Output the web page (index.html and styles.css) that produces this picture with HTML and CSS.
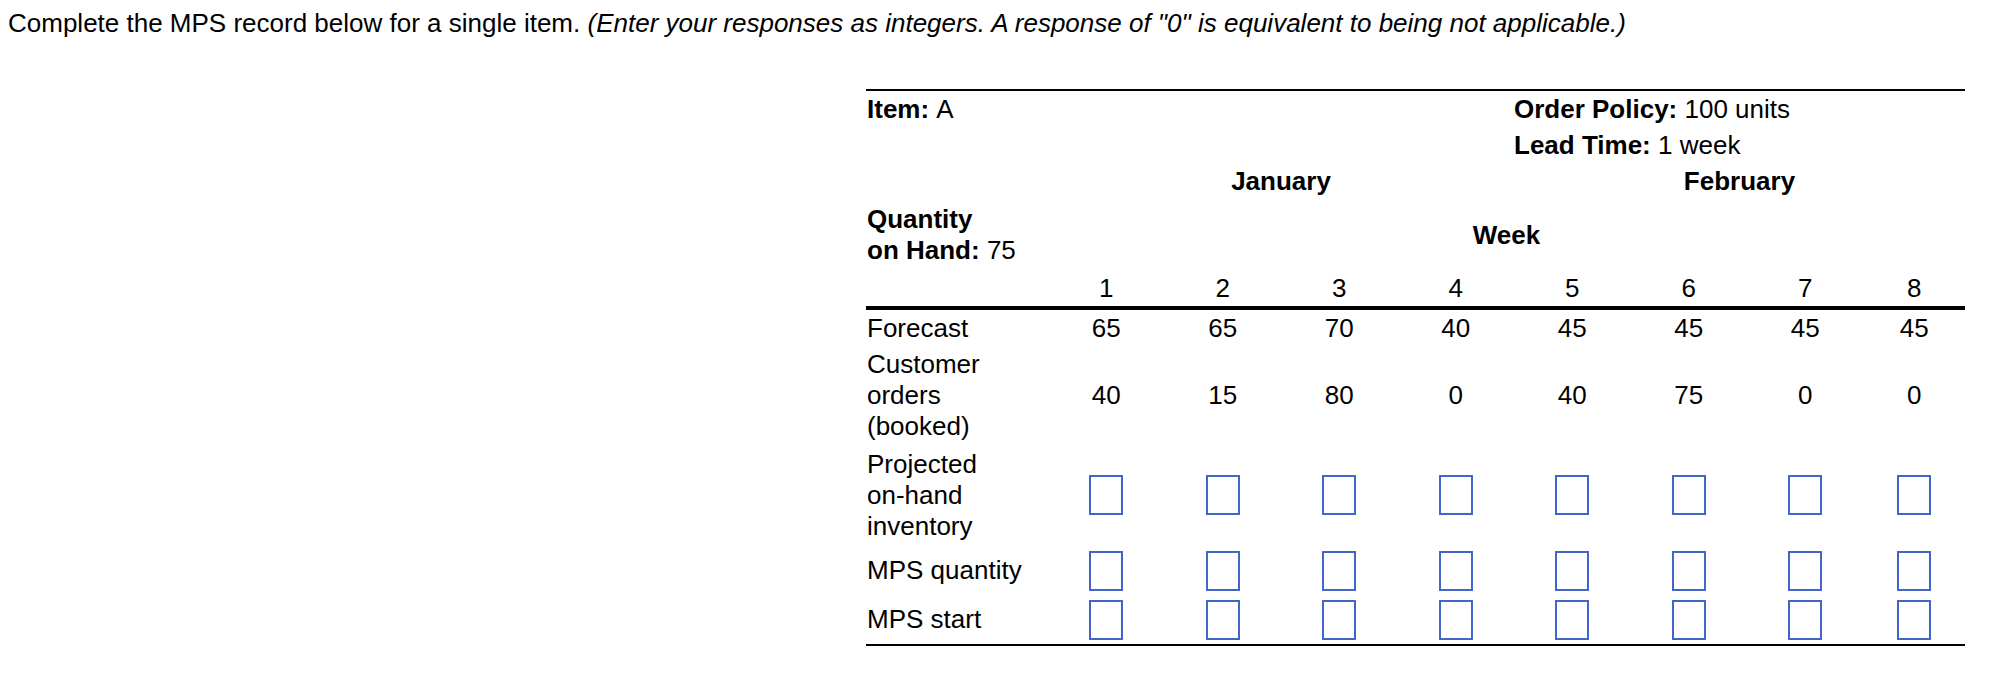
FILE: index.html
```html
<!DOCTYPE html>
<html lang="en">
<head>
<meta charset="utf-8">
<title>MPS record</title>
<link rel="stylesheet" href="styles.css">
</head>
<body>
<p class="prompt">Complete the MPS record below for a single item. <i>(Enter your responses as integers. A response of "0" is equivalent to being not applicable.)</i></p>

<div class="mps">
  <div class="cell lbl r-item"><b>Item:</b>&nbsp;A</div>
  <div class="cell info r-item"><b>Order Policy:</b>&nbsp;100 units</div>
  <div class="cell info r-lead"><b>Lead Time:</b>&nbsp;1 week</div>
  <div class="cell month jan"><b>January</b></div>
  <div class="cell month feb"><b>February</b></div>
  <div class="cell lbl r-qoh"><span><b>Quantity</b><br><b>on Hand:</b> 75</span></div>
  <div class="cell week"><b>Week</b></div>

  <div class="cell lbl r-wk"></div>
  <div class="cell num r-wk">1</div>
  <div class="cell num r-wk">2</div>
  <div class="cell num r-wk">3</div>
  <div class="cell num r-wk">4</div>
  <div class="cell num r-wk">5</div>
  <div class="cell num r-wk">6</div>
  <div class="cell num r-wk">7</div>
  <div class="cell num r-wk">8</div>

  <div class="rule"></div>

  <div class="cell lbl">Forecast</div>
  <div class="cell num">65</div>
  <div class="cell num">65</div>
  <div class="cell num">70</div>
  <div class="cell num">40</div>
  <div class="cell num">45</div>
  <div class="cell num">45</div>
  <div class="cell num">45</div>
  <div class="cell num">45</div>

  <div class="cell lbl"><span>Customer<br>orders<br>(booked)</span></div>
  <div class="cell num">40</div>
  <div class="cell num">15</div>
  <div class="cell num">80</div>
  <div class="cell num">0</div>
  <div class="cell num">40</div>
  <div class="cell num">75</div>
  <div class="cell num">0</div>
  <div class="cell num">0</div>

  <div class="cell lbl"><span>Projected<br>on-hand<br>inventory</span></div>
  <div class="cell num"><input class="box" type="text" aria-label="Projected on-hand inventory week 1"></div>
  <div class="cell num"><input class="box" type="text" aria-label="Projected on-hand inventory week 2"></div>
  <div class="cell num"><input class="box" type="text" aria-label="Projected on-hand inventory week 3"></div>
  <div class="cell num"><input class="box" type="text" aria-label="Projected on-hand inventory week 4"></div>
  <div class="cell num"><input class="box" type="text" aria-label="Projected on-hand inventory week 5"></div>
  <div class="cell num"><input class="box" type="text" aria-label="Projected on-hand inventory week 6"></div>
  <div class="cell num"><input class="box" type="text" aria-label="Projected on-hand inventory week 7"></div>
  <div class="cell num"><input class="box" type="text" aria-label="Projected on-hand inventory week 8"></div>

  <div class="cell lbl">MPS quantity</div>
  <div class="cell num"><input class="box" type="text" aria-label="MPS quantity week 1"></div>
  <div class="cell num"><input class="box" type="text" aria-label="MPS quantity week 2"></div>
  <div class="cell num"><input class="box" type="text" aria-label="MPS quantity week 3"></div>
  <div class="cell num"><input class="box" type="text" aria-label="MPS quantity week 4"></div>
  <div class="cell num"><input class="box" type="text" aria-label="MPS quantity week 5"></div>
  <div class="cell num"><input class="box" type="text" aria-label="MPS quantity week 6"></div>
  <div class="cell num"><input class="box" type="text" aria-label="MPS quantity week 7"></div>
  <div class="cell num"><input class="box" type="text" aria-label="MPS quantity week 8"></div>

  <div class="cell lbl">MPS start</div>
  <div class="cell num"><input class="box" type="text" aria-label="MPS start week 1"></div>
  <div class="cell num"><input class="box" type="text" aria-label="MPS start week 2"></div>
  <div class="cell num"><input class="box" type="text" aria-label="MPS start week 3"></div>
  <div class="cell num"><input class="box" type="text" aria-label="MPS start week 4"></div>
  <div class="cell num"><input class="box" type="text" aria-label="MPS start week 5"></div>
  <div class="cell num"><input class="box" type="text" aria-label="MPS start week 6"></div>
  <div class="cell num"><input class="box" type="text" aria-label="MPS start week 7"></div>
  <div class="cell num"><input class="box" type="text" aria-label="MPS start week 8"></div>
</div>
</body>
</html>
```

FILE: styles.css
```css
html, body {
  background: #ffffff;
}

body {
  margin: 8px;
  font-family: "Liberation Sans", Arial, Helvetica, sans-serif;
  font-size: 26px;
  color: #000000;
}

.prompt {
  margin: 0 0 51px 0;
  line-height: 30px;
  white-space: nowrap;
}

.mps {
  margin-left: 858px;
  width: 1099px;
  display: grid;
  grid-template-columns: 182px repeat(7, 116.5px) 101.5px;
  grid-template-rows: 36px 36px 37px 70px 36px 4px 36px 98px 102px 49px 49px;
  border-top: 2px solid #000000;
  border-bottom: 2px solid #000000;
  line-height: 31px;
}

.cell {
  display: flex;
  align-items: center;
  white-space: nowrap;
}

.lbl {
  grid-column: 1;
  justify-content: flex-start;
  padding-left: 1px;
}

.num {
  justify-content: center;
}

.r-item {
  grid-row: 1;
}

.info {
  grid-column: 6 / 10;
  justify-content: flex-start;
}

.r-lead {
  grid-row: 2;
}

.month {
  grid-row: 3;
  justify-content: center;
}

.jan {
  grid-column: 2 / 6;
}

.feb {
  grid-column: 6 / 10;
}

.r-qoh {
  grid-row: 4;
}

.week {
  grid-row: 4;
  grid-column: 2 / 10;
  justify-content: center;
}

.r-wk {
  grid-row: 5;
}

.rule {
  grid-column: 1 / -1;
  background: #000000;
}

.box {
  box-sizing: border-box;
  width: 34px;
  height: 40px;
  margin: 0;
  padding: 0;
  border: 2px solid #3f66c8;
  border-radius: 0;
  background: #ffffff;
  font: inherit;
  outline: none;
}
```
